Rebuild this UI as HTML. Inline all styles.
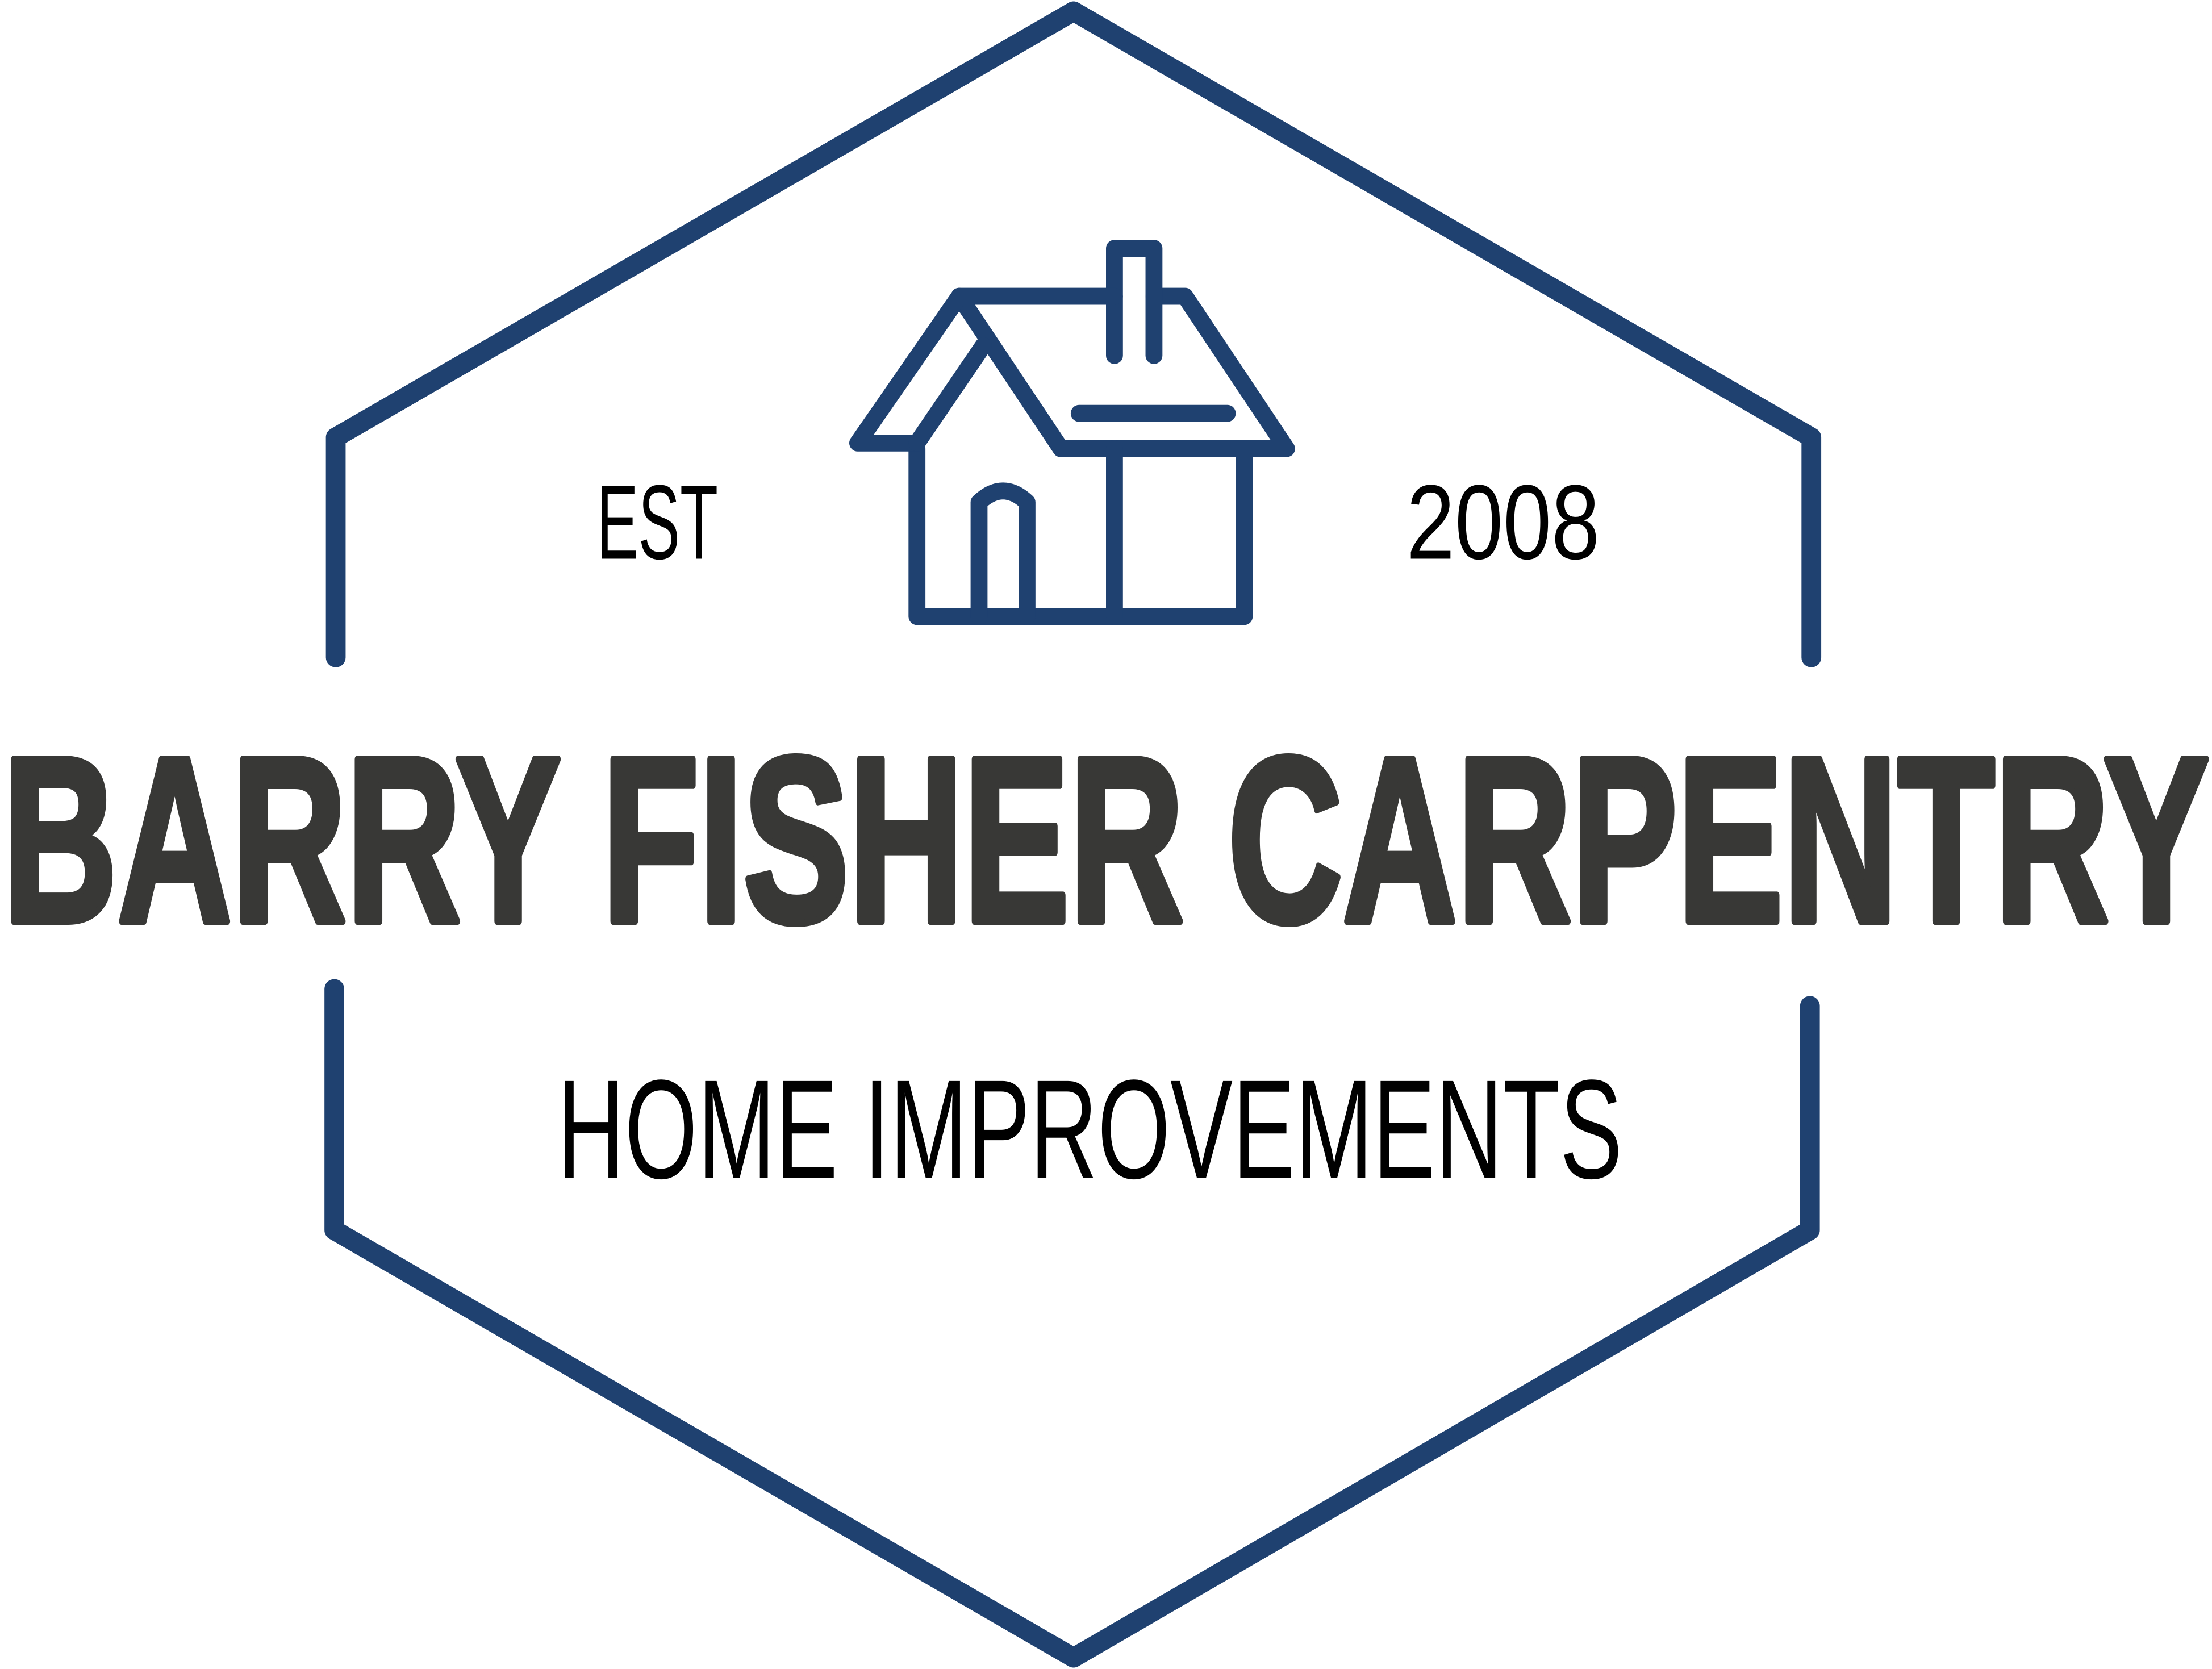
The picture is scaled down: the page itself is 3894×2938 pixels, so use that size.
<!DOCTYPE html>
<html><head><meta charset="utf-8"><style>
html,body{margin:0;padding:0;background:#fff;}
svg{display:block;}
</style></head><body>
<svg width="3894" height="2938" viewBox="0 0 1568 1183" xmlns="http://www.w3.org/2000/svg">
<rect width="1568" height="1183" fill="#fff"/>
<g fill="none" stroke="#1f4170" stroke-width="14" stroke-linecap="round" stroke-linejoin="round">
<polyline points="238,466 238,310 761,8 1284,310 1284,466"/>
<polyline points="237,701 237,872 761,1175 1283,872 1283,713"/>
</g>
<g fill="none" stroke="#1f4170" stroke-width="12" stroke-linecap="round" stroke-linejoin="round">
<path d="M650,318 V437 H882 V318"/>
<path d="M818,210 H840 L912,318 H752 L680,210"/>
<path d="M790,252 V176 H818 V252"/>
<path d="M790,210 H680 L608,314 H650"/>
<path d="M650,314 L697,245"/>
<path d="M765,293 H870"/>
<path d="M790,318 V437"/>
<path d="M694,437 V356 Q711,340 728,356 V437"/>
</g>
<g font-family="'Liberation Sans', sans-serif" fill="#000">
<text x="423" y="396" font-size="75" textLength="86" lengthAdjust="spacingAndGlyphs">EST</text>
<text x="997" y="396" font-size="75" textLength="137" lengthAdjust="spacingAndGlyphs">2008</text>
<text x="395" y="835" font-size="100" textLength="755" lengthAdjust="spacingAndGlyphs">HOME IMPROVEMENTS</text>
<text x="2" y="653" font-size="167" font-weight="bold" fill="#383836" stroke="#383836" stroke-width="5" stroke-linejoin="round" textLength="1564" lengthAdjust="spacingAndGlyphs">BARRY FISHER CARPENTRY</text>
</g>
</svg>
</body></html>
